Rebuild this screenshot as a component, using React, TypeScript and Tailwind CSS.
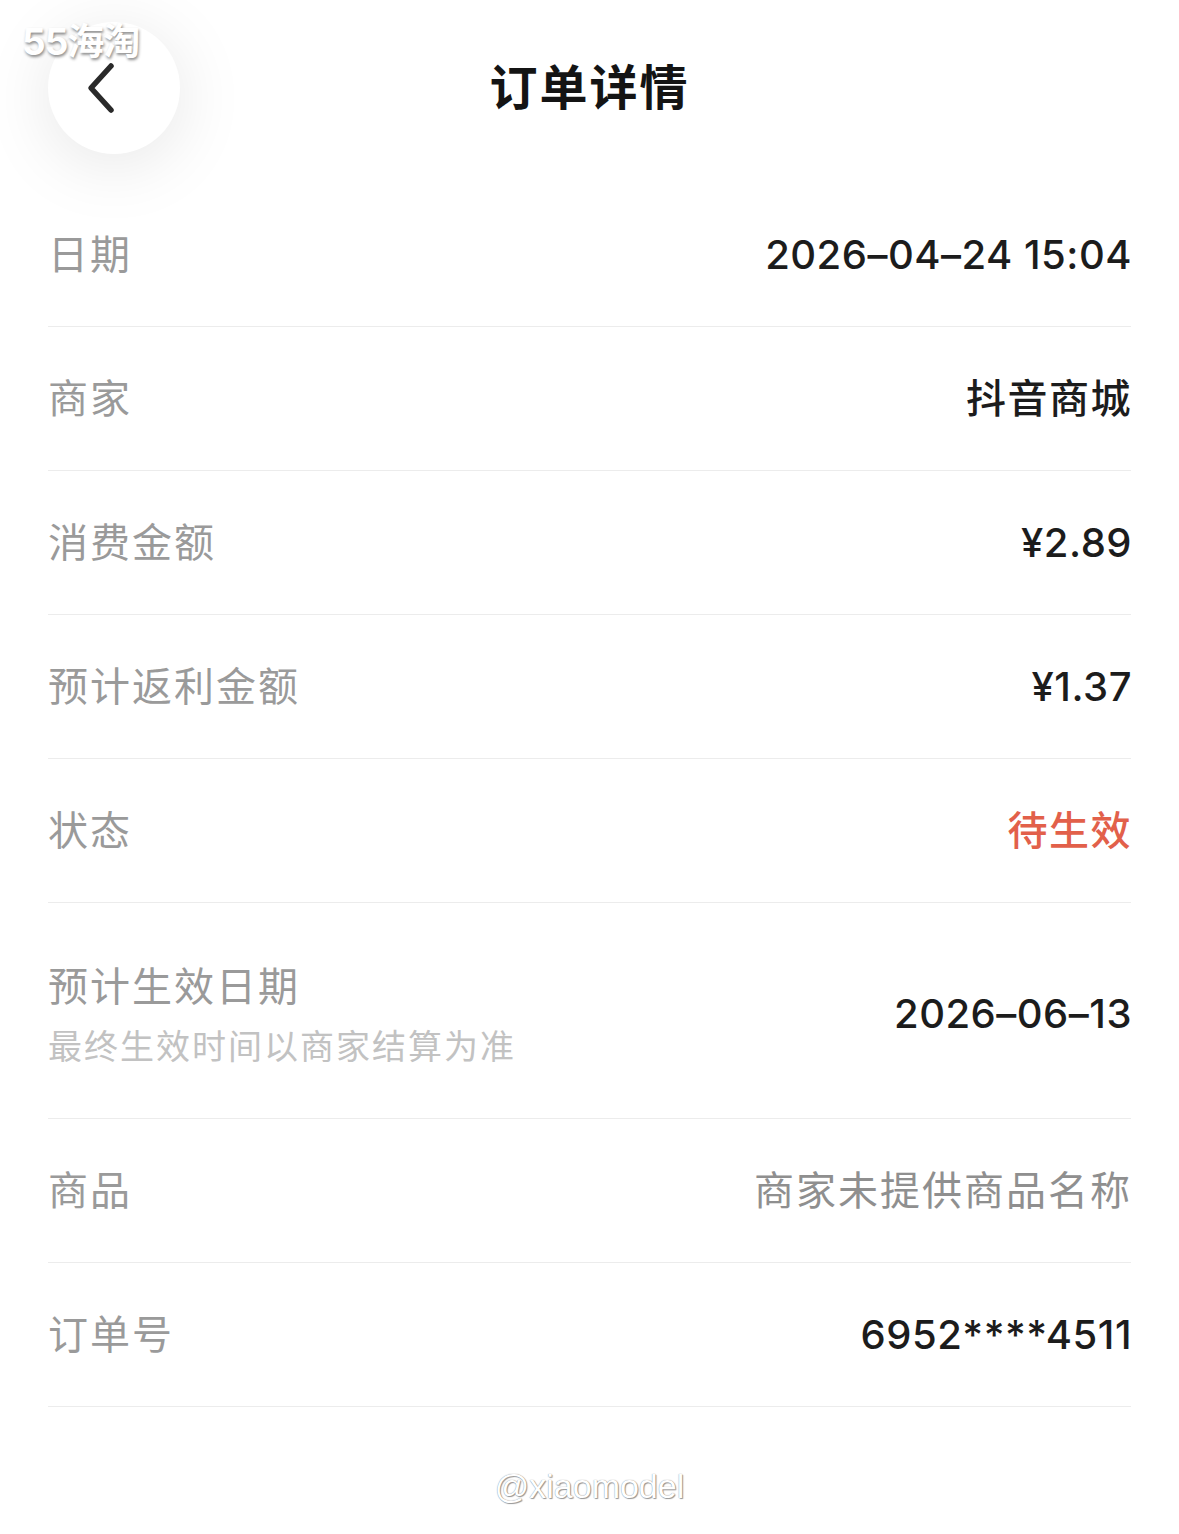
import React from 'react';

const cjk = { fontFamily: 'Inter, "Noto Sans CJK SC", "Noto Sans", sans-serif' };

type Row = {
  label: string;
  value: string;
  sub?: string;
  tone?: 'dark' | 'red' | 'gray' | 'cjk';
};

const rows: Row[] = [
  { label: '日期', value: '2026–04–24 15:04' },
  { label: '商家', value: '抖音商城', tone: 'cjk' },
  { label: '消费金额', value: '¥2.89' },
  { label: '预计返利金额', value: '¥1.37' },
  { label: '状态', value: '待生效', tone: 'red' },
  { label: '预计生效日期', value: '2026–06–13', sub: '最终生效时间以商家结算为准' },
  { label: '商品', value: '商家未提供商品名称', tone: 'gray' },
  { label: '订单号', value: '6952****4511' },
];

function DetailRow({ row }: { row: Row }) {
  let valueClass = 'text-[#1c1c1c] font-medium tracking-[0.5px]';
  if (row.tone === 'red') valueClass = 'text-[#e2604a] font-medium tracking-[1.5px]';
  if (row.tone === 'gray') valueClass = 'text-[#8f8f8f] tracking-[2px]';
  if (row.tone === 'cjk') valueClass = 'text-[#1c1c1c] font-medium tracking-[1.5px]';
  return (
    <div
      className={`flex items-center justify-between border-b border-[#ececec] ${row.sub ? 'h-[216px]' : 'h-[144px]'}`}
    >
      <div className={`flex flex-col ${row.sub ? 'pt-[8px]' : ''}`}>
        <span className="text-[40px] leading-[48px] text-[#9a9a9a] tracking-[2px]">{row.label}</span>
        {row.sub && (
          <span className="mt-[16px] text-[34px] leading-[40px] text-[#c2c2c2] tracking-[2px]">{row.sub}</span>
        )}
      </div>
      <span className={`text-[40px] leading-[48px] -mr-[1px] ${valueClass} ${row.sub ? 'mt-[6px]' : ''}`}>{row.value}</span>
    </div>
  );
}

export default function App() {
  return (
    <div className="relative min-h-[1534px] w-[1179px] bg-white" style={cjk}>
      {/* watermark */}
      <span
        className="absolute left-[22px] top-[22px] z-10 text-[37px] font-bold leading-[40px] text-white tracking-[-1px]"
        style={{ textShadow: '1px 2px 3px rgba(0,0,0,0.45)' }}
      >
        55海淘
      </span>

      {/* 头部 */}
      <div className="relative flex h-[183px] items-start justify-center">
        <div className="absolute left-[48px] top-[22px] flex h-[132px] w-[132px] items-center justify-center rounded-full bg-white shadow-[0_10px_70px_rgba(0,0,0,0.1)]">
          <svg width="36" height="52" viewBox="0 0 36 52" fill="none" className="-ml-[26px]">
            <path d="M28 4 L8 26 L28 48" stroke="#2a2a2a" strokeWidth="5.5" strokeLinecap="round" strokeLinejoin="round" />
          </svg>
        </div>
        <h1 className="mt-[58px] text-[48px] font-bold leading-[60px] text-[#141414] tracking-[2px]">订单详情</h1>
      </div>

      {/* 明细 */}
      <div className="mx-[48px] flex flex-col">
        {rows.map((row) => (
          <DetailRow key={row.label} row={row} />
        ))}
      </div>

      <div className="mt-[54px] flex justify-center">
        <span
          className="text-[34px] font-light text-white"
          style={{ fontFamily: '"Liberation Sans", sans-serif', textShadow: '0 0 1px #777, 1px 1px 1px #999' }}
        >
          @xiaomodel
        </span>
      </div>
    </div>
  );
}
